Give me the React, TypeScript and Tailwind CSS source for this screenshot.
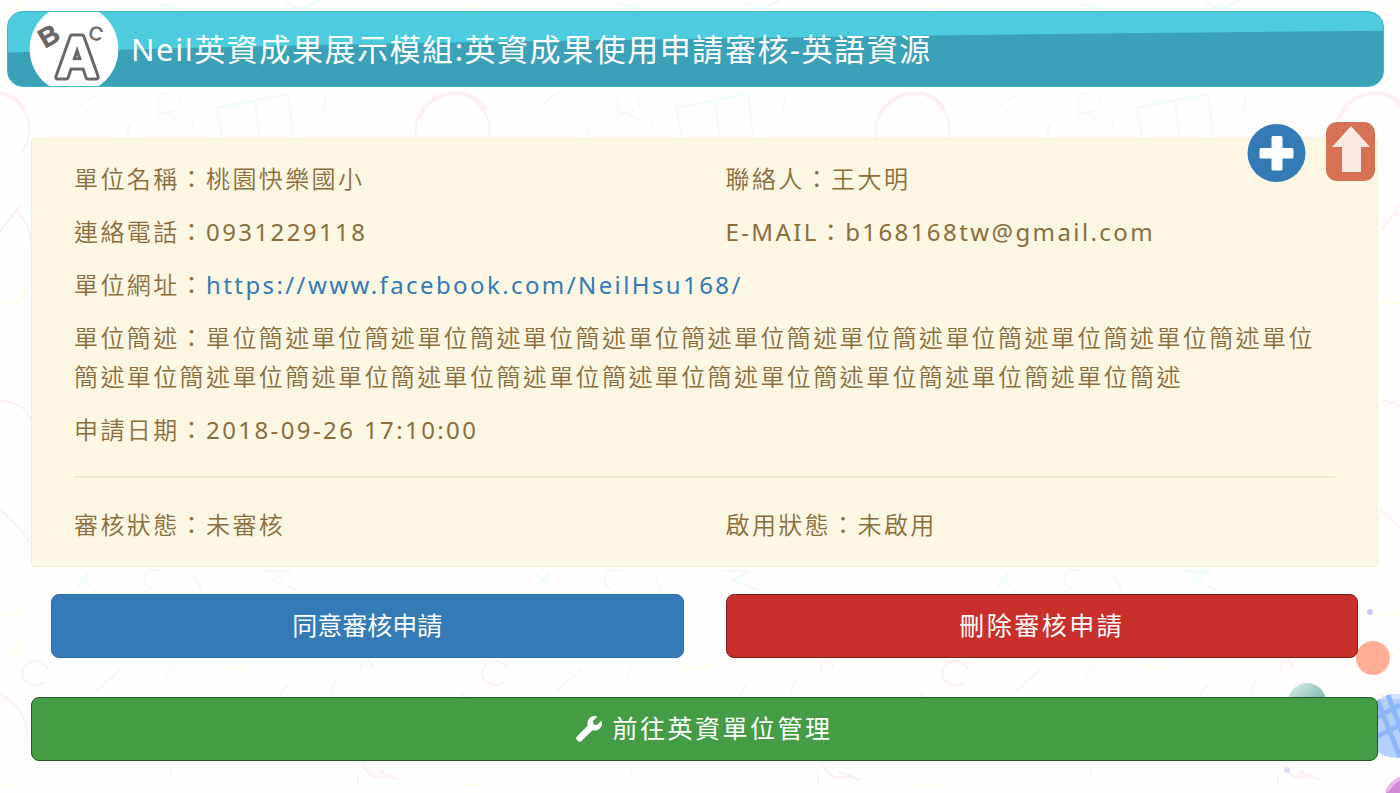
import React from "react";

const summary = "單位簡述".repeat(21);

function Field({ label, children }: { label: string; children: React.ReactNode }) {
  return (
    <div>
      <dt className="inline">{label}：</dt>
      <dd className="inline">{children}</dd>
    </div>
  );
}

function Backdrop() {
  return (
    <div className="pointer-events-none absolute inset-0 -z-10 overflow-hidden" aria-hidden="true">
      <svg className="absolute inset-0 h-full w-full">
        <defs>
          <pattern id="doodles" width="460" height="793" patternUnits="userSpaceOnUse">
            <g fill="none" strokeLinecap="round">
              <g stroke="#fdf0ee" strokeWidth="2">
                <path d="M0 94 A37 37 0 0 1 29 125 Q31 140 22 152 M460 94 A38 38 0 0 0 416 137" />
                <path d="M2 93 A36 36 0 0 1 24 109 M460 94 A38 38 0 0 0 420 115" strokeWidth="4" />
                <path d="M158 94 V120 M153 94 H170 Q182 95 180 105 Q178 114 160 112 L182 120 M192 122 Q194 137 208 132 M365 137 Q380 121 396 137" strokeWidth="1" />
                <path d="M20 205 L0 232 M15 212 Q30 220 31 245 M0 400 Q28 405 31 420 M0 510 Q20 525 31 545" />
                <path d="M47 668 A13 12 0 1 0 44 682 M0 694 Q33 712 25 746" />
                <path d="M362 763 Q372 785 392 774 M380 772 L400 780 M360 670 L366 656 L374 668" />
                <path d="M165 680 L172 666 L184 678 M235 778 L245 768" strokeWidth="1" />
              </g>
              <g stroke="#edfbfc" strokeWidth="2">
                <path d="M80 106 L101 91 M216 108 L288 94 M216 108 L222 137 M288 94 L293 137 M255 103 L259 134 M326 98 L322 112 M130 125 L127 137" />
                <path d="M76 574 L90 586 M88 573 L78 587 M161 571 Q142 566 145 584 L152 590 M195 576 L201 590 M264 571 H290 L272 580 L298 590" />
                <path d="M95 692 L121 669 M280 696 L287 684 M330 696 L335 680 M170 765 L171 773 M358 774 V784" />
                <path d="M155 3 L180 8 M285 2 L300 9 L320 1" />
              </g>
              <g stroke="#fffceb" strokeWidth="3">
                <path d="M0 300 Q20 310 26 290 M0 615 Q18 618 22 606 M12 655 Q20 650 22 640 M222 664 Q238 674 250 664 M2 785 H20 M448 70 V84 M2 18 Q8 8 20 4" />
              </g>
            </g>
          </pattern>
        </defs>
        <rect width="100%" height="100%" fill="#fefefe" />
        <rect width="100%" height="100%" fill="url(#doodles)" />
      </svg>
      <svg className="absolute top-[593px] right-0 h-[200px] w-[140px]" viewBox="0 0 140 200">
        <defs>
          <linearGradient id="teal" x1="0" y1="0" x2="1" y2="1">
            <stop offset="0" stopColor="#dff0ed" />
            <stop offset="1" stopColor="#4fa095" />
          </linearGradient>
          <clipPath id="ball">
            <circle cx="136" cy="133" r="32" />
          </clipPath>
        </defs>
        <circle cx="110" cy="19" r="3" fill="#c3c9fb" />
        <circle cx="113" cy="65" r="17" fill="#ffad95" />
        <circle cx="47" cy="109" r="19" fill="url(#teal)" />
        <circle cx="27" cy="177" r="3" fill="#dfdcf3" />
        <g clipPath="url(#ball)">
          <circle cx="136" cy="133" r="32" fill="#b4d0fd" />
          <path d="M104 98H140V106H104Z" fill="#d2e3fe" />
          <g stroke="#8db7fc" strokeWidth="5">
            <path d="M116 104 L140 164 M127 100 L150 160 M106 130 L140 112 M108 148 L140 132" />
          </g>
        </g>
        <circle cx="149" cy="207" r="24" fill="#d18ad6" />
        <path d="M127 198 Q134 187 140 186" stroke="#e6b8ea" strokeWidth="4" fill="none" />
      </svg>
    </div>
  );
}

function Banner() {
  return (
    <header className="relative isolate mr-4 ml-[7px] flex h-[76px] items-center gap-3 overflow-hidden rounded-2xl border border-[#45b3c6] bg-[#4dcce0] pl-[21px]">
      <svg className="absolute inset-0 -z-10 h-full w-full" viewBox="0 0 1376 75" preserveAspectRatio="none" aria-hidden="true">
        <path d="M0 41 Q500 27 1376 19 V75 H0 Z" fill="#3aa1b9" />
      </svg>
      <svg className="h-[74px] w-[90px] shrink-0" viewBox="0 0 90 74" aria-hidden="true">
        <circle cx="45" cy="37" r="44.500" fill="#fff" />
        <g fontFamily="'Liberation Sans', Arial, sans-serif" textAnchor="middle" strokeLinejoin="round">
          <text x="48" y="65" fontSize="57" fontWeight="700" stroke="#686668" strokeWidth="7" fill="#686668">A</text>
          <text x="48" y="65" fontSize="57" fontWeight="700" stroke="#fff" strokeWidth="1" fill="#fff">A</text>
          <text x="0" y="8" fontSize="27" fontWeight="700" fill="#686668" stroke="#686668" strokeWidth="0.6" transform="translate(20.500 25) rotate(-30)">B</text>
          <text x="0" y="7" fontSize="19" stroke="#686668" strokeWidth="0.6" fill="#686668" transform="translate(67 21) rotate(15)">C</text>
        </g>
      </svg>
      <h1 className="text-[31px] leading-10 font-normal tracking-wider text-white">
        Neil英資成果展示模組:英資成果使用申請審核-英語資源
      </h1>
    </header>
  );
}

export default function App() {
  return (
    <div className="relative isolate min-h-screen pt-[11px] pb-8 font-['Noto_Sans','Noto_Sans_CJK_TC',sans-serif]">
      <Backdrop />
      <Banner />

      <div className="absolute top-[122px] right-[25px] flex items-start gap-5">
        <button type="button" aria-label="新增" className="cursor-pointer">
          <svg className="h-[61px] w-[59px]" viewBox="0 -1 59 61" aria-hidden="true">
            <circle cx="29.500" cy="30" r="29" fill="#337ab7" />
            <path
              d="M26 13h8a1.500 1.500 0 0 1 1.500 1.500V25h9.500a1.500 1.500 0 0 1 1.500 1.500v7.500a1.500 1.500 0 0 1-1.500 1.500h-9.500v10.500a1.500 1.500 0 0 1-1.500 1.500h-8a1.500 1.500 0 0 1-1.500-1.500V35.500H14a1.500 1.500 0 0 1-1.500-1.500v-7.500A1.500 1.500 0 0 1 14 25h10.500V14.500A1.500 1.500 0 0 1 26 13Z"
              fill="#fff"
            />
          </svg>
        </button>
        <a href="#top" aria-label="回到頂端">
          <svg className="h-[59px] w-[49px]" viewBox="0 0 49 59" aria-hidden="true">
            <rect width="49" height="59" rx="11" fill="#cf5a37" fillOpacity="0.85" />
            <path d="M25 4 L44 25 H35 V50 H16 V25 H6 Z" fill="#fae9e1" />
          </svg>
        </a>
      </div>

      <main className="mt-[51px] mr-[22px] ml-[31px]">
        <section className="rounded border border-[#faebcc] bg-[#fcf7e3] px-[42px] pt-5 pb-[22px] text-2xl leading-[39px] font-[350] tracking-widest text-[#8a6d3b]">
          <dl className="flex flex-col gap-3.5">
            <div className="grid grid-cols-2 gap-x-[42px] gap-y-3.5">
              <Field label="單位名稱">桃園快樂國小</Field>
              <Field label="聯絡人">王大明</Field>
              <Field label="連絡電話">
                <span className="font-normal">0931229118</span>
              </Field>
              <div className="font-normal">
                <Field label="E-MAIL">b168168tw@gmail.com</Field>
              </div>
            </div>
            <Field label="單位網址">
              <a href="https://www.facebook.com/NeilHsu168/" className="font-normal text-[#337ab7]">
                https://www.facebook.com/NeilHsu168/
              </a>
            </Field>
            <Field label="單位簡述">{summary}</Field>
            <Field label="申請日期">
              <span className="font-normal">2018-09-26 17:10:00</span>
            </Field>
          </dl>
          <hr className="my-[27px] border-t-2 border-[#f5e9cb]" />
          <dl className="grid grid-cols-2 gap-x-[42px]">
            <Field label="審核狀態">未審核</Field>
            <Field label="啟用狀態">未啟用</Field>
          </dl>
        </section>

        <div className="mt-[27px] grid grid-cols-2 gap-x-[42px] px-5 text-[25px] text-white">
          <button type="button" className="h-16 cursor-pointer rounded-lg border border-[#2e6da4] bg-[#337ab7]">
            同意審核申請
          </button>
          <button type="button" className="h-16 cursor-pointer rounded-lg border border-[#761c19] bg-[#c9302c] tracking-widest">
            刪除審核申請
          </button>
        </div>

        <button
          type="button"
          className="mt-[39px] flex h-16 w-full cursor-pointer items-center justify-center gap-2.5 rounded-lg border border-[#255625] bg-[#449d44] text-[25px] tracking-widest text-white"
        >
          <svg className="h-[26px] w-[26px]" viewBox="0 0 512 512" fill="currentColor" aria-hidden="true">
            <path d="M507.73 109.1c-2.24-9.03-13.54-12.09-20.12-5.51l-74.36 74.36-67.88-11.31-11.31-67.88 74.36-74.36c6.62-6.62 3.43-17.9-5.66-20.16-47.38-11.74-99.55.91-136.58 37.93-39.64 39.64-50.55 97.1-34.05 147.2L18.74 402.76c-24.99 24.99-14 55 0 72l20 20c18 16 50 20 70.500-1.500l213.21-213.21c50.12 16.71 107.47 5.68 147.37-34.22 37.07-37.07 49.7-89.32 37.91-136.73z" />
          </svg>
          前往英資單位管理
        </button>
      </main>
    </div>
  );
}
